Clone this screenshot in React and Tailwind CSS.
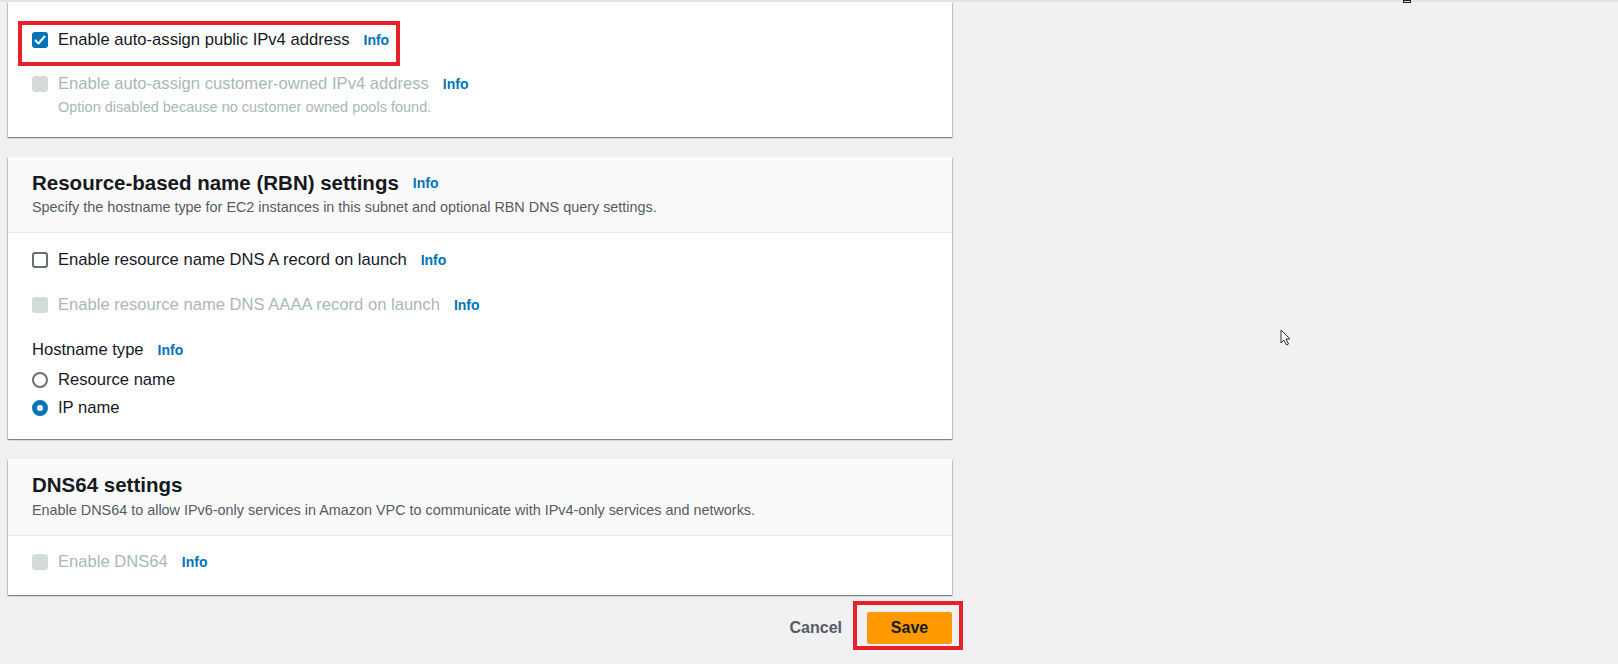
import React from 'react';

const font = { fontFamily: '"Liberation Sans", Arial, sans-serif' };

const Info = () => (
  <span className="ml-[14px] text-[14px] font-bold text-[#0073bb] leading-none">Info</span>
);

const Checkbox = ({ checked, disabled }) => {
  if (disabled) {
    return <span className="w-4 h-4 shrink-0 rounded-[3px] bg-[#d5dbdb]" />;
  }
  if (checked) {
    return (
      <span className="w-4 h-4 shrink-0 rounded-[3px] bg-[#0073bb] flex items-center justify-center">
        <svg viewBox="0 0 16 16" className="w-4 h-4">
          <path d="M3.5 8.5l3 3 6-7" fill="none" stroke="white" strokeWidth="2" strokeLinecap="round" strokeLinejoin="round" />
        </svg>
      </span>
    );
  }
  return <span className="w-4 h-4 shrink-0 rounded-[3px] border-2 border-[#687078] bg-white" />;
};

const Radio = ({ selected }) =>
  selected ? (
    <span className="w-4 h-4 shrink-0 rounded-full border-[5px] border-[#0073bb] bg-white" />
  ) : (
    <span className="w-4 h-4 shrink-0 rounded-full border-2 border-[#687078] bg-white" />
  );

const CheckRow = ({ label, checked, disabled, className = '' }) => (
  <div className={`flex items-center h-6 ${className}`}>
    <Checkbox checked={checked} disabled={disabled} />
    <span className={`ml-[10px] text-[16.6px] ${disabled ? 'text-[#aab7b8]' : 'text-[#16191f]'}`}>{label}</span>
    <Info />
  </div>
);

const Card = ({ children, className = '' }) => (
  <div className={`w-[944px] bg-white shadow-[0_1px_1px_0_rgba(0,28,36,0.3),1px_1px_1px_0_rgba(0,28,36,0.15),-1px_1px_1px_0_rgba(0,28,36,0.15)] ${className}`}>
    {children}
  </div>
);

const CardHeader = ({ title, info, desc, className = '', descClass = '' }) => (
  <div className={`bg-[#fafafa] border-b border-[#eaeded] px-6 ${className}`}>
    <div className="flex items-center h-7">
      <h2 className="text-[20.5px] font-bold text-[#16191f]">{title}</h2>
      {info && <Info />}
    </div>
    <p className={`text-[14.4px] leading-5 text-[#545b64] ${descClass}`}>{desc}</p>
  </div>
);

export default function App() {
  return (
    <div style={font} className="relative w-[1618px] h-[664px] overflow-hidden bg-[#f0f1f0]">
      <div className="h-[2px] bg-[#e3e4e3]" />
      <div className="absolute left-[1403px] top-0 w-[8px] h-[3px] border border-[#222] bg-[#ddd]" />

      <div className="pl-2 flex flex-col">
        {/* Subnet auto-assign settings */}
        <Card className="pt-[26px] pb-5 px-6">
          <div className="relative inline-flex">
            <CheckRow label="Enable auto-assign public IPv4 address" checked />
            <span className="absolute -left-[14px] -right-[11px] -top-[7px] -bottom-[14px] border-4 border-[#e8202a]" />
          </div>
          <CheckRow className="mt-[17px]" label="Enable auto-assign customer-owned IPv4 address" disabled />
          <p className="ml-[26px] mt-px text-[14.5px] leading-5 text-[#aab7b8]">
            Option disabled because no customer owned pools found.
          </p>
        </Card>

        {/* RBN settings */}
        <Card className="mt-5">
          <CardHeader
            className="pt-3 pb-[15px]"
            title="Resource-based name (RBN) settings"
            info
            desc="Specify the hostname type for EC2 instances in this subnet and optional RBN DNS query settings."
          />
          <div className="px-6 pt-[15px] pb-[19px]">
            <CheckRow label="Enable resource name DNS A record on launch" />
            <CheckRow className="mt-[21px]" label="Enable resource name DNS AAAA record on launch" disabled />
            <div className="mt-[21px] flex items-center h-6">
              <span className="text-[16.6px] text-[#16191f]">Hostname type</span>
              <Info />
            </div>
            <div className="mt-[6px] flex items-center h-6">
              <Radio />
              <span className="ml-[10px] text-[16.6px] text-[#16191f]">Resource name</span>
            </div>
            <div className="mt-1 flex items-center h-6">
              <Radio selected />
              <span className="ml-[10px] text-[16.6px] text-[#16191f]">IP name</span>
            </div>
          </div>
        </Card>

        {/* DNS64 settings */}
        <Card className="mt-5">
          <CardHeader
            className="pt-3 pb-[15px]"
            descClass="mt-px"
            title="DNS64 settings"
            desc="Enable DNS64 to allow IPv6-only services in Amazon VPC to communicate with IPv4-only services and networks."
          />
          <div className="px-6 pt-[14px] pb-[21px]">
            <CheckRow label="Enable DNS64" disabled />
          </div>
        </Card>

        {/* Actions */}
        <div className="w-[944px] mt-[17px] flex items-center justify-end">
          <button className="text-[16px] font-bold text-[#545b64] mr-[25px]">Cancel</button>
          <div className="relative">
            <button className="w-[85px] h-8 rounded-[2px] bg-[#ff9900] text-[16px] font-bold text-[#16191f]">Save</button>
            <span className="absolute -left-[14px] -right-[11px] -top-[11px] -bottom-[6px] border-4 border-[#e8202a]" />
          </div>
        </div>
      </div>

      {/* mouse pointer */}
      <svg className="absolute left-[1280px] top-[329px]" width="12" height="18" viewBox="0 0 12 18">
        <path d="M1 1v13l3-3 2.5 5 2-1-2.5-5H10z" fill="white" stroke="#333" strokeWidth="1" strokeLinejoin="round" />
      </svg>
    </div>
  );
}
